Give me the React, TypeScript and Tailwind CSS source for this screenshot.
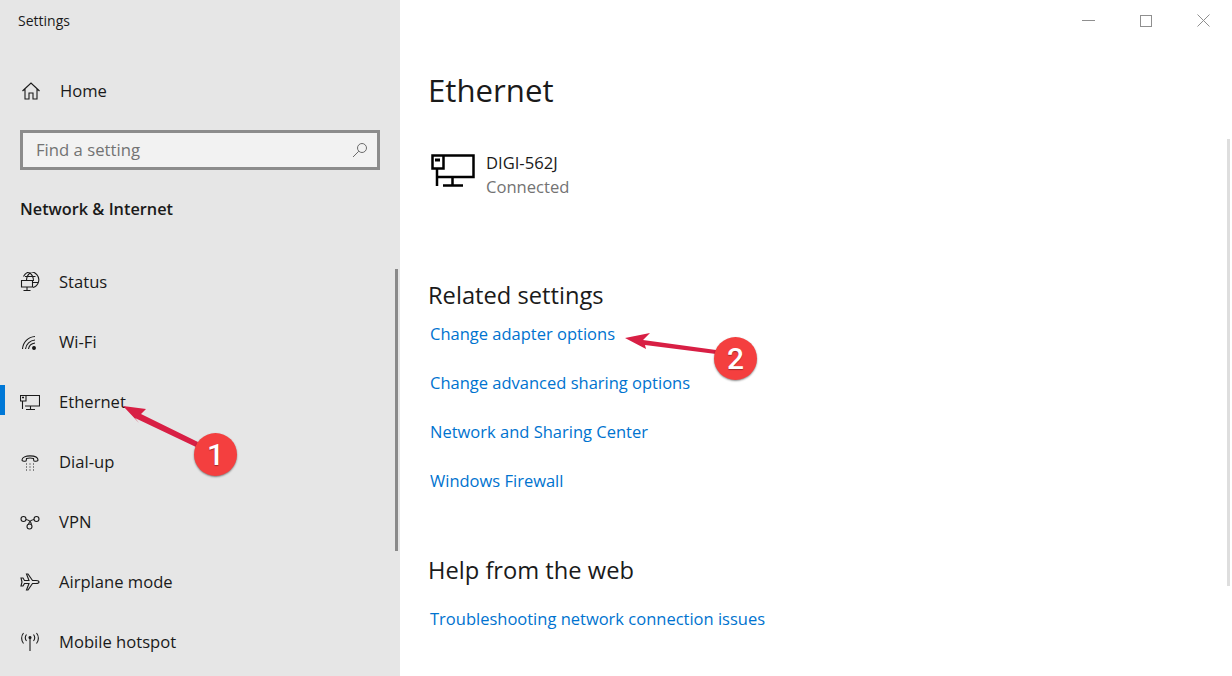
import type { ReactNode } from "react";

const FONT = "font-['Open_Sans','Noto_Sans',sans-serif]";

function Ic({ children }: { children: ReactNode }) {
  return (
    <svg
      viewBox="0 0 20 20"
      fill="none"
      stroke="currentColor"
      strokeWidth="1.100"
      className="w-5 h-5 text-[#1a1a1a] shrink-0"
    >
      {children}
    </svg>
  );
}

const HomeIcon = () => (
  <Ic>
    <path d="M1.500 10 10 2l8.500 8M4 8v10h4v-6h4v6h4V8" />
  </Ic>
);
const StatusIcon = () => (
  <Ic>
    <path d="M3.500 4.500A8 8 0 1 1 13 15.500M1.500 8.500h11v6.500h-11zM7 15v3M3.500 18.500h7" />
    <path d="M10 1c-2.500 2-3.500 4.500-3.500 7.500M10 1c2.500 2 3.500 4.500 3.500 8M5 4.500h10.500M13 10.500h5" />
  </Ic>
);
const WifiIcon = () => (
  <Ic>
    <path d="M2.500 17C3 10 8 5 15 4.500M5.500 17c.5-5 4.500-8.500 9.500-9M8.500 17c.4-3 3-5.500 6.500-6" />
    <circle cx="14" cy="16" r="1.400" fill="currentColor" />
  </Ic>
);
const EthernetIcon = () => (
  <Ic>
    <path d="M.5 3.500h19v10.500H5M2.500 9v8M.5 3.500h5.500v5.500H.5zM10.500 14v3.500M6 17.500h9" />
    <path d="M2 5.500h2" strokeWidth="1.500" />
  </Ic>
);
const DialIcon = () => (
  <Ic>
    <path d="M2 8C2 2.500 18 2.500 18 8c0 1-1 1.500-4 1-.5-1-.5-2-.5-2.500-2-.5-5-.5-7 0 0 .5 0 1.500-.5 2.500-3 .5-4 0-4-1Z" />
    <path d="M6 12h1M9.500 12h1M13 12h1M6 15h1M9.500 15h1M13 15h1M6 18h1M9.500 18h1M13 18h1" />
  </Ic>
);
const VpnIcon = () => (
  <Ic>
    <circle cx="3.500" cy="7" r="2.500" />
    <circle cx="16.500" cy="7" r="2.500" />
    <circle cx="9.500" cy="14.500" r="2.500" />
    <path d="M6 7.500c3 .5 5 2 5.500 5M14 7.500c-3 .5-5 2-5.500 5" />
  </Ic>
);
const PlaneIcon = () => (
  <Ic>
    <path d="M19 10c0-1-1.500-1.500-3-1.500h-3.500L8 2H6.500L9 8.500H4.500L3 6H1l1 4-1 4h2l1.500-2.500H9L6.500 18H8l4.500-6.500H16c1.500 0 3-.5 3-1.500Z" />
  </Ic>
);
const HotspotIcon = () => (
  <Ic>
    <path d="M10 6.500V19" />
    <circle cx="10" cy="5.500" r="1" fill="currentColor" />
    <path d="M6.500 2.500c-1.500 2-1.500 4.500 0 6.500M13.500 2.500c1.500 2 1.500 4.500 0 6.500M3.500 1c-2.500 3-2.500 7.500 0 10.500M16.500 1c2.500 3 2.500 7.500 0 10.500" />
  </Ic>
);

const NAV = [
  { label: "Status", icon: <StatusIcon /> },
  { label: "Wi-Fi", icon: <WifiIcon /> },
  { label: "Ethernet", icon: <EthernetIcon />, active: true },
  { label: "Dial-up", icon: <DialIcon /> },
  { label: "VPN", icon: <VpnIcon /> },
  { label: "Airplane mode", icon: <PlaneIcon /> },
  { label: "Mobile hotspot", icon: <HotspotIcon /> },
];

const LINKS = [
  "Change adapter options",
  "Change advanced sharing options",
  "Network and Sharing Center",
  "Windows Firewall",
];

function Callout({ n, className, arrow }: { n: number; className: string; arrow: string }) {
  return (
    <>
      <svg className="absolute left-0 top-0 w-[1232px] h-[676px] pointer-events-none" viewBox="0 0 1232 676">
        <path d={arrow} fill="#d81f44" />
      </svg>
      <div
        className={
          "absolute w-[43px] h-[43px] rounded-full bg-[#f43f3f] text-white flex items-center justify-center text-[30px] leading-none font-medium shadow-[0_1px_2px_rgba(0,0,0,0.45)] [text-shadow:0_1px_1px_rgba(0,0,0,0.35)] font-['Roboto',sans-serif] " +
          className
        }
      >
        {n}
      </div>
    </>
  );
}

export default function App() {
  return (
    <div className={"relative w-[1232px] h-[676px] overflow-hidden flex bg-white text-[#1a1a1a] " + FONT}>
      {/* sidebar */}
      <aside className="relative w-[400px] h-full bg-[#e6e6e6] shrink-0">
        <div className="pl-[18px] pt-[12px] text-[14px] leading-[18px]">Settings</div>
        <div className="flex items-center h-[60px] mt-[31px] pl-[21px] gap-[19px] text-[16.600px]">
          <HomeIcon />
          <span>Home</span>
        </div>
        <div className="mx-[20px] mt-[9px] h-[40px] border-[3px] border-[#8c8c8c] bg-[#f2f2f2] flex items-center justify-between pl-[13px] pr-[9px] text-[16.700px] text-[#737373]">
          <span>Find a setting</span>
          <svg viewBox="0 0 16 16" fill="none" stroke="#6b6b6b" strokeWidth="1" className="w-4 h-4">
            <circle cx="10" cy="6" r="4.500" />
            <path d="M6.800 9.200 1 15" />
          </svg>
        </div>
        <div className="pl-[20px] mt-[27px] text-[16.300px] leading-[24px] font-semibold">Network &amp; Internet</div>
        <nav className="mt-[31px]">
          {NAV.map((item) => (
            <div key={item.label} className="relative h-[60px] flex items-center pl-[20px] gap-[19px] text-[16.600px]">
              {item.active && <span className="absolute left-0 top-[13px] w-[5px] h-[30px] bg-[#0078d7]" />}
              {item.icon}
              <span>{item.label}</span>
            </div>
          ))}
        </nav>
        <div className="absolute right-[2px] top-[269px] w-[3px] h-[282px] bg-[#8a8a8a]" />
      </aside>

      {/* content */}
      <main className="relative flex-1 pl-[28px]">
        <h1 className="mt-[66px] text-[31.200px] leading-[48px]">Ethernet</h1>
        <div className="flex items-start mt-[37px] gap-[11px] h-[48px]">
          <svg viewBox="0 0 44 33" fill="none" stroke="#000" strokeWidth="2.500" className="ml-[3px] mt-[3px] w-[44px] h-[33px] shrink-0">
            <path d="M12 1.500h30.500v21.500H6M1.500 1.500h11v13h-11zM6 14.500V32M21.500 23v8M12 31.500h20" />
            <path d="M4 6h5" strokeWidth="3" />
          </svg>
          <div className="text-[16.600px] leading-[24px]">
            <div>DIGI-562J</div>
            <div className="text-[#737373]">Connected</div>
          </div>
        </div>
        <h2 className="mt-[79px] text-[23.700px] leading-[34px]">Related settings</h2>
        <div className="flex flex-col mt-[7px]">
          {LINKS.map((link) => (
            <div key={link} className="h-[49px] pl-[2px] pt-[3px] text-[16.500px] leading-[24px] text-[#0073cf]">
              {link}
            </div>
          ))}
        </div>
        <h2 className="mt-[38px] text-[23.700px] leading-[34px]">Help from the web</h2>
        <div className="pl-[2px] pt-[20px] text-[16.500px] leading-[24px] text-[#0073cf]">
          Troubleshooting network connection issues
        </div>

        {/* window buttons */}
        <div className="absolute right-[22px] top-[14px] flex items-center gap-[45px]">
          <svg viewBox="0 0 13 13" stroke="#8f8f8f" fill="none" className="w-[13px] h-[13px]">
            <path d="M0 6.500h13" />
          </svg>
          <svg viewBox="0 0 12 12" stroke="#8f8f8f" fill="none" className="w-[12px] h-[12px]">
            <rect x="0.500" y="0.500" width="11" height="11" />
          </svg>
          <svg viewBox="0 0 13 13" stroke="#8f8f8f" fill="none" className="w-[13px] h-[13px]">
            <path d="M.5.500l12 12M12.500.500l-12 12" />
          </svg>
        </div>
        <div className="absolute right-[2px] top-[139px] w-[3px] h-[447px] bg-[#dedede]" />
      </main>

      <Callout
        n={1}
        className="left-[194px] top-[433px]"
        arrow="M123 406 L146 409 L141 414 L198 442 L196 447 L135 418 L139 423 Z"
      />
      <Callout
        n={2}
        className="left-[714px] top-[337px]"
        arrow="M625 338 L650 333 L643 340 L716 350 L716 354 L645 345 L646 349 Z"
      />
    </div>
  );
}
